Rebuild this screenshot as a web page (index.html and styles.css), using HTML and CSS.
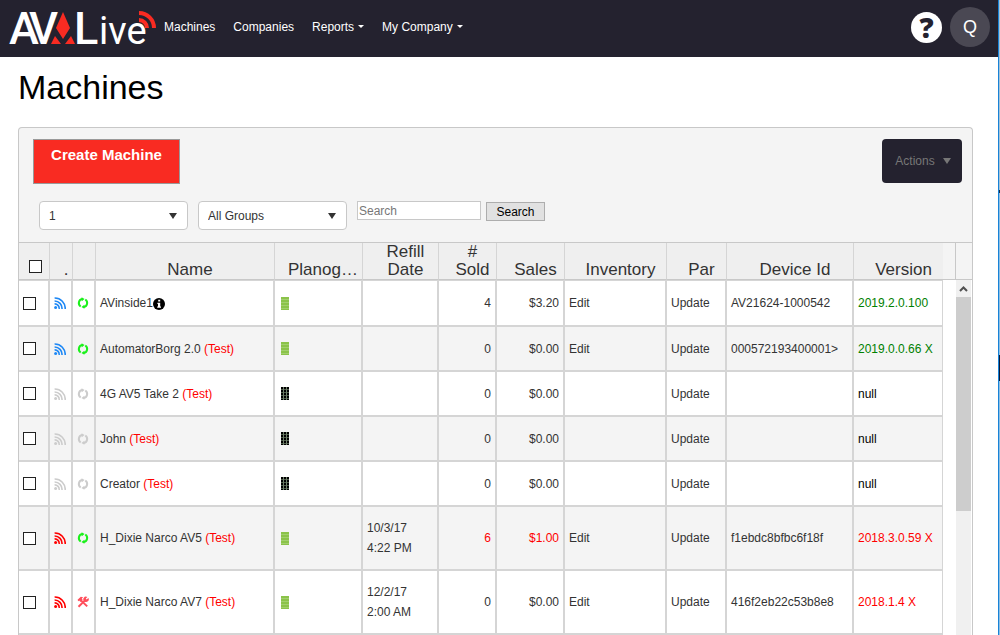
FILE: index.html
```html
<!DOCTYPE html>
<html lang="en">
<head>
  <meta charset="UTF-8">
  <meta name="viewport" content="width=device-width, initial-scale=1.0">
  <title>AVA Live - Machines</title>
  <link rel="stylesheet" href="styles.css">
</head>
<body>

  <!-- ICONS -->
  <svg class="sprite" aria-hidden="true">
    <symbol id="rss" viewBox="0 0 12 12">
      <circle cx="1.6" cy="10.4" r="1.5" fill="currentColor"/>
      <path d="M.6 6.900A4.400 4.400 0 0 1 5.100 12M.6 4A7.400 7.400 0 0 1 8 12M.6 1A10.400 10.400 0 0 1 11.200 12" fill="none" stroke="currentColor" stroke-width="1.6"/>
    </symbol>
    <symbol id="sync" viewBox="0 0 12 12">
      <path d="M3.700 9.500A4.200 4.200 0 0 1 5.200 1.900M8.300 2.500A4.200 4.200 0 0 1 6.800 10.100" fill="none" stroke="currentColor" stroke-width="2"/>
      <path d="M4.600.2L7.600 2 4.800 4.200zM7.400 7.800L4.400 10 7.400 11.800z" fill="currentColor"/>
    </symbol>
    <symbol id="tools" viewBox="0 0 12 12">
      <path d="M1.500 10.800L8 4.400M4 4.400l6.200 6" fill="none" stroke="currentColor" stroke-width="2"/>
      <path d="M.6 3.800L3.800.8l2.400.5-1.400 1.200.8 1.300L3.400 6 2.200 4.600l-1 .6z" fill="currentColor"/>
      <path d="M10.400 1L8.800 2.600l.8.800L11.400 2A2.600 2.600 0 0 1 7.600 5.400 2.600 2.600 0 0 1 10.400 1z" fill="currentColor"/>
    </symbol>
    <symbol id="info" viewBox="0 0 12 12">
      <circle cx="6" cy="6" r="6" fill="#000"/>
      <path d="M5.200 1.800h2v1.800h-2zM4.400 4.800h2.800v3.600h.8v1.300H4.200V8.400H5V6.100h-.6z" fill="#fff"/>
    </symbol>
  </svg>

  <div class="page">

    <!-- NAVBAR -->
    <header>
      <a class="logo" href="#" aria-label="AVA Live">
        <svg width="148" height="54" viewBox="0 -9 148 54">
          <g fill="#fff" font-family="Roboto, sans-serif" font-size="45">
            <text x="0" y="35" font-weight="500">A</text>
            <text x="20" y="35" font-weight="500">V</text>
            <text x="65" y="35" font-weight="500">L</text>
            <text x="90" y="35" font-size="38">ive</text>
          </g>
          <path d="M54 3l7 16-7 11-7-11zM46 27l6 8H42zM62 27l4 8H56z" fill="#f92b22" stroke="#24222f" stroke-width="2" paint-order="stroke"/>
          <g fill="none" stroke="#f92b22" stroke-width="4">
            <path d="M130 4a15 15 0 0 1 15 15"/>
            <path d="M130 11a8 8 0 0 1 8 8"/>
          </g>
        </svg>
      </a>
      <nav>
        <ul>
          <li><a href="#">Machines</a></li>
          <li><a href="#">Companies</a></li>
          <li><a class="dropbtn" href="#">Reports</a></li>
          <li><a class="dropbtn" href="#">My Company</a></li>
        </ul>
      </nav>
      <div class="user">
        <button class="help" type="button" aria-label="Help">?</button>
        <button class="avatar" type="button">Q</button>
      </div>
    </header>

    <main>
      <h1>Machines</h1>

      <div class="panel">
        <!-- TOOLBAR -->
        <div class="actions">
          <button class="create" type="button">Create Machine</button>
          <button class="actions-btn" type="button">Actions</button>
        </div>
        <form class="filters">
          <div class="select">
            <select aria-label="Company"><option>1</option></select>
          </div>
          <div class="select">
            <select aria-label="Group"><option>All Groups</option></select>
          </div>
          <input class="search" type="text" placeholder="Search" aria-label="Search">
          <button class="search-btn" type="button">Search</button>
        </form>

        <!-- GRID -->
        <div class="grid">
          <table>
            <thead>
              <tr>
                <th class="w-check"><input type="checkbox" aria-label="Select all"></th>
                <th class="w-icon">.</th>
                <th class="w-icon"></th>
                <th>Name</th>
                <th class="w-plan">Planogram</th>
                <th class="w-date wrap">Refill Date</th>
                <th class="w-sold wrap"># Sold</th>
                <th class="w-sales">Sales</th>
                <th class="w-inv">Inventory</th>
                <th class="w-par">Par</th>
                <th class="w-device">Device Id</th>
                <th class="w-version">Version</th>
              </tr>
            </thead>
            <tbody>
              <tr>
                <td><input type="checkbox" aria-label="Select AVinside1"></td>
                <td><svg class="icon blue"><use href="#rss"/></svg></td>
                <td><svg class="icon green"><use href="#sync"/></svg></td>
                <td>AVinside1<svg class="icon info"><use href="#info"/></svg></td>
                <td><span class="plan"></span></td>
                <td></td>
                <td class="num">4</td>
                <td class="num">$3.20</td>
                <td><a href="#">Edit</a></td>
                <td><a href="#">Update</a></td>
                <td>AV21624-1000542</td>
                <td class="ok">2019.2.0.100</td>
              </tr>
              <tr>
                <td><input type="checkbox" aria-label="Select AutomatorBorg 2.0"></td>
                <td><svg class="icon blue"><use href="#rss"/></svg></td>
                <td><svg class="icon green"><use href="#sync"/></svg></td>
                <td>AutomatorBorg 2.0 <span class="red">(Test)</span></td>
                <td><span class="plan"></span></td>
                <td></td>
                <td class="num">0</td>
                <td class="num">$0.00</td>
                <td><a href="#">Edit</a></td>
                <td><a href="#">Update</a></td>
                <td>000572193400001&gt;</td>
                <td class="ok">2019.0.0.66 X</td>
              </tr>
              <tr>
                <td><input type="checkbox" aria-label="Select 4G AV5 Take 2"></td>
                <td><svg class="icon gray"><use href="#rss"/></svg></td>
                <td><svg class="icon gray"><use href="#sync"/></svg></td>
                <td>4G AV5 Take 2 <span class="red">(Test)</span></td>
                <td><span class="plan empty"></span></td>
                <td></td>
                <td class="num">0</td>
                <td class="num">$0.00</td>
                <td></td>
                <td><a href="#">Update</a></td>
                <td></td>
                <td class="none">null</td>
              </tr>
              <tr>
                <td><input type="checkbox" aria-label="Select John"></td>
                <td><svg class="icon gray"><use href="#rss"/></svg></td>
                <td><svg class="icon gray"><use href="#sync"/></svg></td>
                <td>John <span class="red">(Test)</span></td>
                <td><span class="plan empty"></span></td>
                <td></td>
                <td class="num">0</td>
                <td class="num">$0.00</td>
                <td></td>
                <td><a href="#">Update</a></td>
                <td></td>
                <td class="none">null</td>
              </tr>
              <tr>
                <td><input type="checkbox" aria-label="Select Creator"></td>
                <td><svg class="icon gray"><use href="#rss"/></svg></td>
                <td><svg class="icon gray"><use href="#sync"/></svg></td>
                <td>Creator <span class="red">(Test)</span></td>
                <td><span class="plan empty"></span></td>
                <td></td>
                <td class="num">0</td>
                <td class="num">$0.00</td>
                <td></td>
                <td><a href="#">Update</a></td>
                <td></td>
                <td class="none">null</td>
              </tr>
              <tr>
                <td><input type="checkbox" aria-label="Select H_Dixie Narco AV5"></td>
                <td><svg class="icon red"><use href="#rss"/></svg></td>
                <td><svg class="icon green"><use href="#sync"/></svg></td>
                <td>H_Dixie Narco AV5 <span class="red">(Test)</span></td>
                <td><span class="plan"></span></td>
                <td class="date">10/3/17<br>4:22 PM</td>
                <td class="num red">6</td>
                <td class="num red">$1.00</td>
                <td><a href="#">Edit</a></td>
                <td><a href="#">Update</a></td>
                <td>f1ebdc8bfbc6f18f</td>
                <td class="red">2018.3.0.59 X</td>
              </tr>
              <tr>
                <td><input type="checkbox" aria-label="Select H_Dixie Narco AV7"></td>
                <td><svg class="icon red"><use href="#rss"/></svg></td>
                <td><svg class="icon pink"><use href="#tools"/></svg></td>
                <td>H_Dixie Narco AV7 <span class="red">(Test)</span></td>
                <td><span class="plan"></span></td>
                <td class="date">12/2/17<br>2:00 AM</td>
                <td class="num">0</td>
                <td class="num">$0.00</td>
                <td><a href="#">Edit</a></td>
                <td><a href="#">Update</a></td>
                <td>416f2eb22c53b8e8</td>
                <td class="red">2018.1.4 X</td>
              </tr>
            </tbody>
          </table>
          <div class="gutter">
            <div class="side-head"></div>
          </div>
          <div class="scroll">
            <div class="side-head"></div>
            <div class="track">
              <svg class="up" width="15" height="17" viewBox="0 0 15 17"><path d="M4 11l3.500-3.500L11 11" fill="none" stroke="#505050" stroke-width="2"/></svg>
              <div class="thumb"></div>
            </div>
          </div>
        </div>
      </div>
    </main>
  </div>

</body>
</html>
```

FILE: styles.css
```css
* {
  box-sizing: border-box;
}

body {
  margin: 0;
  padding-right: 1px;
  font-family: "Liberation Sans", Arial, sans-serif;
  font-size: 12px;
  color: #333;
  background: linear-gradient(#a8c4d8 190px, #1c2c44 190px, #1c2c44 193px, #8fc0e4 193px, #8fc0e4 355px, #0a1a38 355px, #0a1a38 381px, #8fc0e4 381px);
}

button,
input,
select {
  font-family: inherit;
  font-size: 12px;
  margin: 0;
}

a {
  color: inherit;
  text-decoration: none;
}

.sprite {
  display: none;
}

.page {
  background: #fff;
  border-right: 1px solid #1883d7;
}

/* ===== NAVBAR ===== */
header {
  display: flex;
  align-items: center;
  height: 57px;
  padding: 0 8px 3px 9px;
  background: #24222f;
  color: #fff;
}

.logo svg {
  display: block;
  overflow: visible;
}

nav {
  flex: 1;
  margin-left: 7px;
}

nav ul {
  display: flex;
  gap: 18px;
  margin: 0;
  padding: 0;
  list-style: none;
}

.dropbtn::after {
  content: "";
  display: inline-block;
  margin-left: 4px;
  vertical-align: 3px;
  border: 3px solid transparent;
  border-top-color: #fff;
  border-bottom: 0;
}

.user {
  display: flex;
  align-items: center;
  gap: 8px;
}

.help,
.avatar {
  padding: 0;
  border: 0;
  border-radius: 50%;
}

.help {
  width: 31px;
  height: 31px;
  background: #fff;
  color: #24222f;
  font-family: "Open Sans", sans-serif;
  font-size: 28px;
  font-weight: 800;
  line-height: 30px;
}

.avatar {
  width: 40px;
  height: 40px;
  background: #4a4853;
  color: #fff;
  font-size: 18px;
}

/* ===== CONTENT ===== */
main {
  padding: 10px 25px 0 18px;
}

h1 {
  margin: 0 0 20px;
  font-size: 34px;
  font-weight: normal;
  line-height: 40px;
  color: #000;
}

.panel {
  border: 1px solid #c8c8c8;
  border-bottom: 0;
  border-radius: 4px 4px 0 0;
  background: #f4f4f4;
}

.actions {
  display: flex;
  justify-content: space-between;
  padding: 11px 10px 0 14px;
}

.create {
  width: 147px;
  height: 45px;
  padding: 0 0 14px;
  border: 1px solid #999;
  background: #f92b22;
  color: #fff;
  font-size: 15px;
  font-weight: bold;
}

.actions-btn {
  display: flex;
  align-items: center;
  justify-content: center;
  gap: 8px;
  width: 80px;
  height: 44px;
  padding: 0 0 0 2px;
  border: 0;
  border-radius: 4px;
  background: #24222f;
  color: #777;
}

.actions-btn::after,
.select::after {
  content: "";
  border: 4px solid transparent;
  border-top: 6px solid;
  border-bottom: 0;
}

.filters {
  display: flex;
  padding: 17px 20px 12px;
}

.select {
  position: relative;
  width: 149px;
  margin-right: 10px;
}

.select::after {
  position: absolute;
  top: 12px;
  right: 11px;
  border-top-color: #333;
  pointer-events: none;
}

.select select {
  width: 100%;
  height: 29px;
  padding: 0 9px;
  appearance: none;
  border: 1px solid #c8c8c8;
  border-radius: 4px;
  background: #fff;
  color: #333;
}

.search {
  width: 124px;
  height: 19px;
  padding: 0 1px;
  border: 1px solid #c8c8c8;
  background: #fff;
}

.search::placeholder {
  color: #777;
}

.search-btn {
  width: 59px;
  height: 19px;
  margin: 1px 0 0 5px;
  padding: 0;
  border: 1px solid #adadad;
  background: #e1e1e1;
  color: #000;
}

/* ===== GRID ===== */
.grid {
  display: grid;
  grid-template-columns: 1fr 13px 16px;
  border-top: 1px solid #c8c8c8;
  background: #fff;
}

table {
  width: 100%;
  table-layout: fixed;
  border-collapse: separate;
  border-spacing: 0;
}

th {
  height: 37px;
  padding: 0 3px 0 13px;
  border-right: 1px solid #d5d5d5;
  border-bottom: 1px solid #c8c8c8;
  background: #efefef;
  font-size: 17px;
  font-weight: normal;
  line-height: 18px;
  vertical-align: bottom;
  white-space: nowrap;
  overflow: hidden;
  text-overflow: ellipsis;
}

th:last-child {
  border-right: 0;
}

.wrap {
  padding: 0 12px 0 22px;
  white-space: normal;
}

.w-check { width: 31px; padding: 0 0 6px 2px; }
.w-icon { width: 23px; padding: 0 0 0 10px; }
.w-plan { width: 88px; }
.w-date { width: 76px; }
.w-sold { width: 58px; padding: 0 3px 0 13px; }
.w-sales { width: 68px; }
.w-inv { width: 102px; }
.w-par { width: 60px; }
.w-device { width: 127px; }
.w-version { width: 89px; }

td {
  height: 45px;
  padding: 0 4px;
  border-right: 2px solid #d5d5d5;
  border-bottom: 2px solid #d5d5d5;
  line-height: 20px;
  white-space: nowrap;
}

td:last-child {
  border-right-width: 1px;
}

tbody tr:first-child td {
  height: 47px;
  border-top: 1px solid #d5d5d5;
}

tbody tr:nth-child(even) {
  background: #f4f4f4;
}

.date {
  height: 64px;
}

.num {
  text-align: right;
}

input[type="checkbox"] {
  display: block;
  width: 13px;
  height: 13px;
  appearance: none;
  border: 1px solid #222;
  background: #fff;
}

th input[type="checkbox"] {
  margin: 0 auto;
}

.icon {
  display: block;
  width: 12px;
  height: 12px;
}

.icon.info {
  display: inline-block;
  vertical-align: -3px;
}

.plan {
  display: block;
  width: 8px;
  height: 13px;
  margin-left: 2px;
  background: repeating-linear-gradient(#8bc34a 0 2px, #a2cf6e 2px 3px);
}

.plan.empty {
  background:
    repeating-linear-gradient(90deg, transparent 0 2px, #6d7d68 2px 3px),
    repeating-linear-gradient(#000 0 2px, #4c5a48 2px 3px);
}

.blue { color: #1e88f5; }
.green { color: #1bf01b; }
.gray { color: #ccc; }
.pink { color: #ff4d5a; }
.red { color: #f00; }
.ok { color: #008000; }
.none { color: #000; }

/* ===== SCROLLBAR ===== */
.scroll {
  display: flex;
  flex-direction: column;
}

.side-head {
  height: 37px;
  border-bottom: 1px solid #c8c8c8;
  background: #f4f4f4;
}

.gutter .side-head {
  border-right: 1px solid #c8c8c8;
}

.track {
  flex: 1;
  margin-right: 1px;
  background: #f0f0f0;
}

.up {
  display: block;
}

.thumb {
  height: 214px;
  background: #cdcdcd;
}
```
